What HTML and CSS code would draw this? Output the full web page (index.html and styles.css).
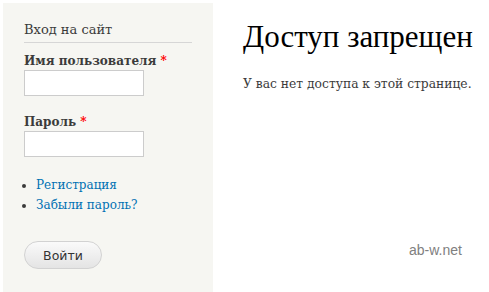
FILE: index.html
```html
<!DOCTYPE html>
<html lang="ru">
<head>
  <meta charset="UTF-8" />
  <title>Доступ запрещен</title>
  <link rel="stylesheet" href="styles.css">
</head>
<body>
  <div class="page">
    <aside class="sidebar">
      <h2 class="block-title">Вход на сайт</h2>
      <form class="login-form">
        <label class="field-label">Имя пользователя <span class="required">*</span></label>
        <input class="text-input" type="text">
        <label class="field-label pass-label">Пароль <span class="required">*</span></label>
        <input class="text-input" type="password">
        <ul class="links">
          <li><a href="#">Регистрация</a></li>
          <li><a href="#">Забыли пароль?</a></li>
        </ul>
        <button class="submit" type="button">Войти</button>
      </form>
    </aside>

    <main class="content">
      <h1 class="title">Доступ запрещен</h1>
      <p class="message">У вас нет доступа к этой странице.</p>
      <div class="watermark">ab-w.net</div>
    </main>
  </div>
</body>
</html>
```

FILE: styles.css
```css
* { box-sizing: border-box; }

body {
  margin: 0;
  background: #fff;
  font-family: "DejaVu Serif", Georgia, serif;
  color: #3b3b3b;
}

.page {
  display: flex;
  padding: 3px 0 0 3px;
  height: 292px;
}

.sidebar {
  width: 210px;
  background: #f6f6f2;
  padding: 18px 21px 0 21px;
}

.block-title {
  margin: 0;
  font-size: 13px;
  font-weight: normal;
  line-height: 18px;
  padding-bottom: 3px;
  border-bottom: 1px solid #d6d6d6;
}

.login-form {
  display: flex;
  flex-direction: column;
  align-items: flex-start;
}

.field-label {
  margin-top: 9px;
  font-size: 12px;
  font-weight: bold;
  line-height: 18px;
}

.pass-label {
  margin-top: 17px;
}

.required {
  color: #f00;
}

.text-input {
  width: 120px;
  height: 26px;
  margin: 0;
  border: 1px solid #ccc;
  background: #fff;
}

.links {
  margin: 18px 0 0;
  padding-left: 12px;
  font-size: 12px;
  line-height: 20px;
}

.links a {
  color: #0071b3;
  text-decoration: none;
}

.submit {
  margin-top: 26px;
  width: 78px;
  height: 28px;
  border: 1px solid #d2d2d2;
  border-radius: 14px;
  background: linear-gradient(#fafafa, #e4e4e4);
  font-family: "DejaVu Sans", sans-serif;
  font-size: 12.5px;
  color: #333;
}

.content {
  flex: 1;
  padding: 16px 0 0 30px;
  display: flex;
  flex-direction: column;
}

.title {
  margin: 0;
  font-family: "Liberation Serif", serif;
  font-weight: normal;
  font-size: 31px;
  line-height: 36px;
  color: #000;
}

.message {
  margin: 20px 0 0;
  font-size: 12.3px;
  line-height: 18px;
}

.watermark {
  margin: 149px 0 0 166px;
  font-family: "Liberation Sans", sans-serif;
  font-size: 14px;
  color: #808080;
}
```
